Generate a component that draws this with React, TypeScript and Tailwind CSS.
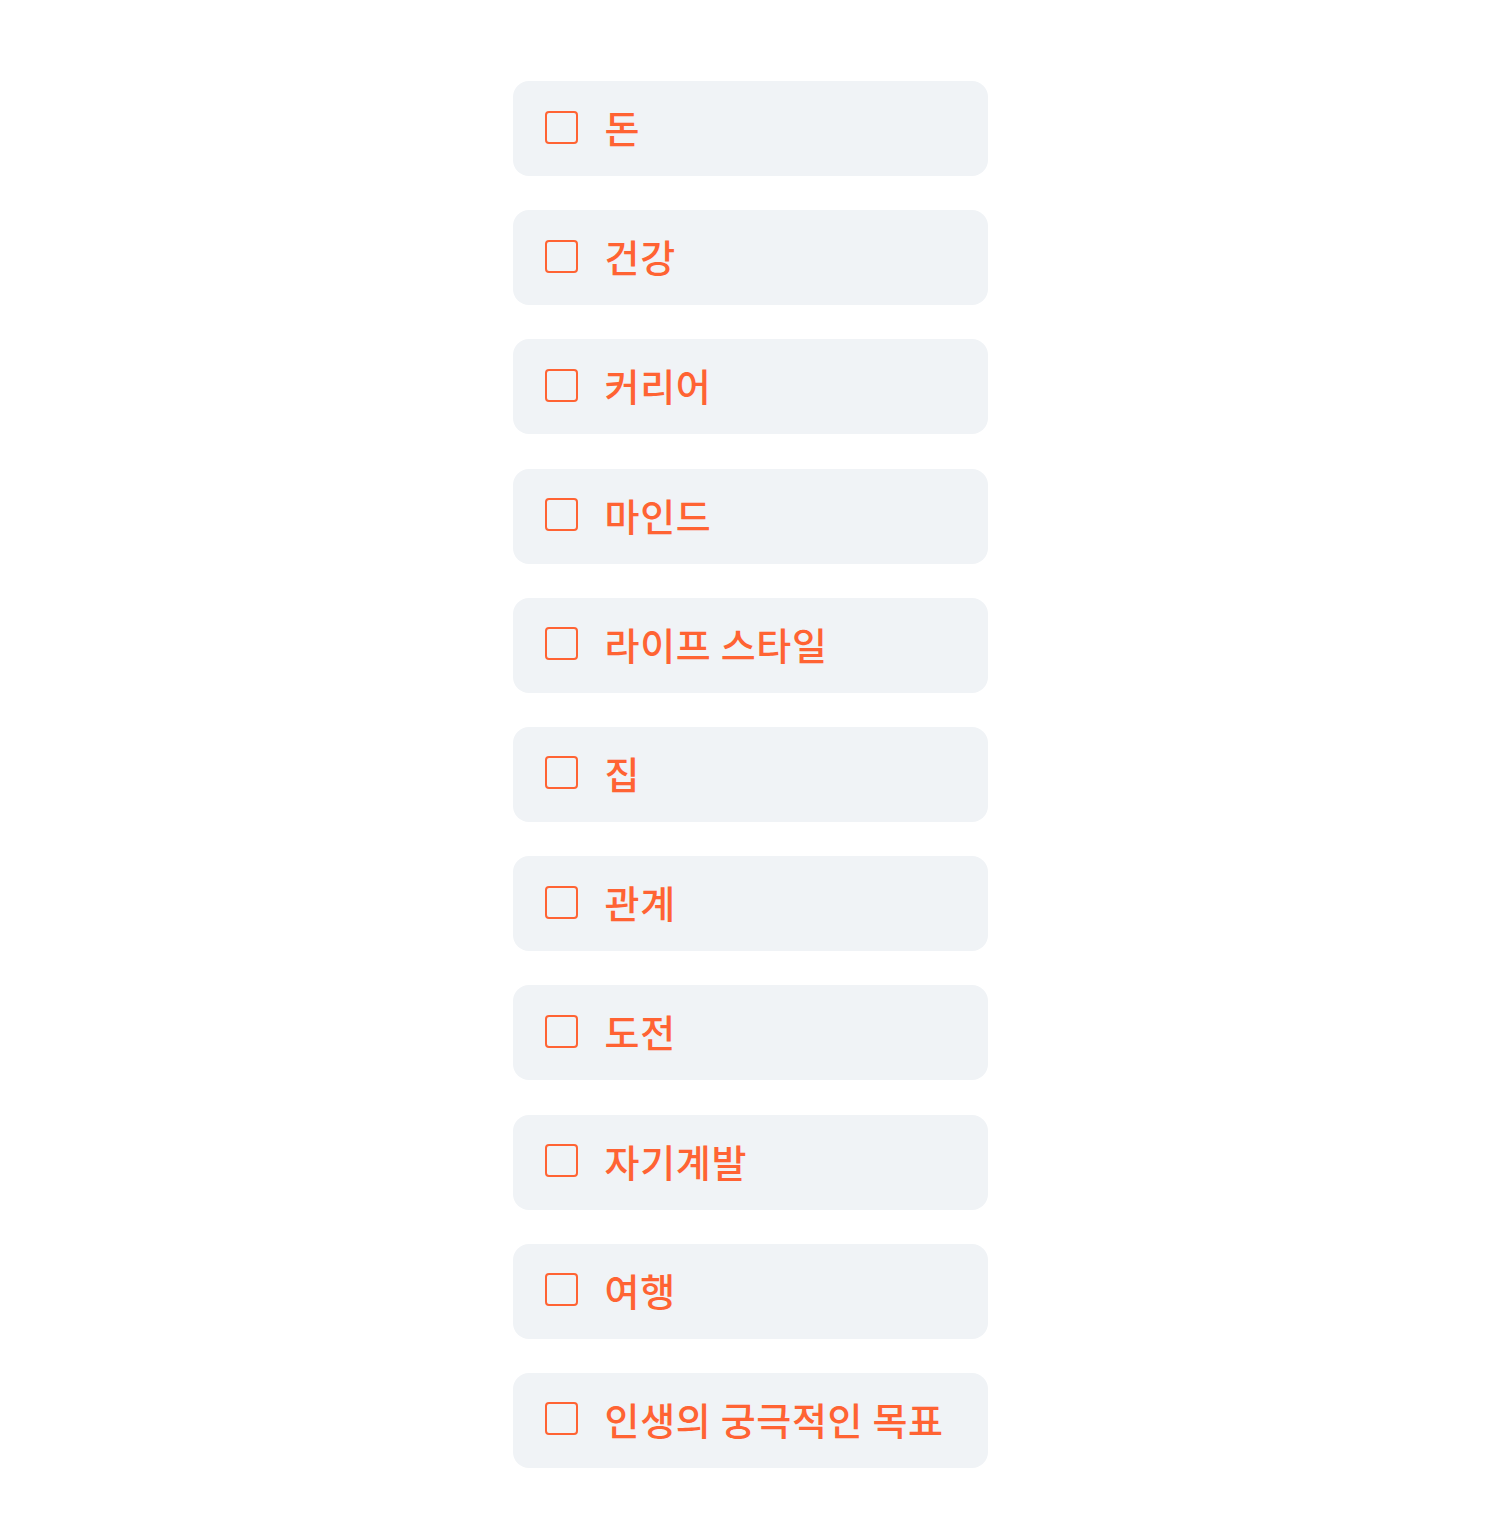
const items = [
  "돈",
  "건강",
  "커리어",
  "마인드",
  "라이프 스타일",
  "집",
  "관계",
  "도전",
  "자기계발",
  "여행",
  "인생의 궁극적인 목표",
];

const App = () => {
  return (
    <div
      className="min-h-[1536px] bg-white pt-[81px]"
      style={{ fontFamily: '"Noto Sans CJK KR", "Noto Sans", sans-serif' }}
    >
      <ul className="mx-auto flex w-[475px] flex-col gap-[34.2px]">
        {items.map((item) => (
          <li key={item}>
            <label className="flex h-[95px] cursor-pointer items-center gap-[27px] rounded-[16px] bg-[#f0f3f6] px-[32px] pb-[3px]">
              <span className="h-[33px] w-[33px] shrink-0 rounded-[4px] border-2 border-[#ff6333]" />
              <span className="text-[38px] font-medium leading-none tracking-[0.018em] text-[#ff6333]">
                {item}
              </span>
            </label>
          </li>
        ))}
      </ul>
    </div>
  );
};

export default App;
